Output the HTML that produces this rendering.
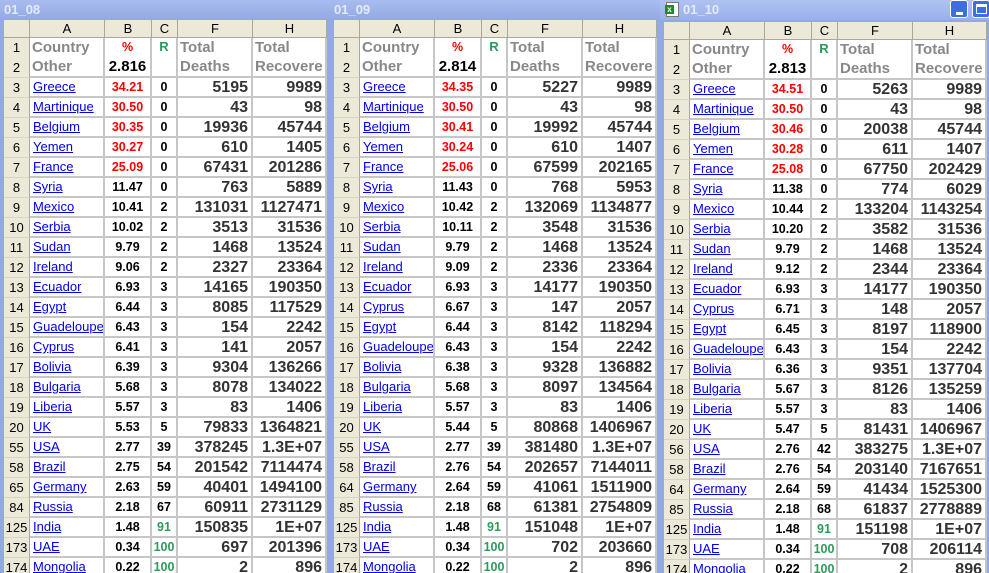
<!DOCTYPE html>
<html><head><meta charset="utf-8"><style>
*{box-sizing:border-box;margin:0;padding:0}
body{width:989px;height:573px;overflow:hidden;background:#93a9e4;font-family:"Liberation Sans",Arial,sans-serif;position:relative}
.p{position:absolute;top:0;height:573px;overflow:hidden}
.tb{position:absolute;left:0;top:0;right:0;height:20px;background:linear-gradient(#a9bcef,#93a9e4);color:#e4eafa;font-weight:bold;font-size:13px;line-height:19px;padding-left:4px}
.g{position:absolute;top:20px;left:4px;background:#fff}
.r{display:flex;height:20px}
.r>div{height:20px;border-right:2px solid #c6c6c6;border-bottom:2px solid #c6c6c6;overflow:hidden;white-space:nowrap}
.h{height:18px!important}
.h>div{height:18px!important;background:#ece9d8;border-right:1px solid #aca899!important;border-bottom:1px solid #aca899!important;text-align:center;font-size:13px;line-height:17px;color:#000}
.n{width:26px;background:#ece9d8;border-right:1px solid #aca899!important;border-bottom:1px solid #d8d4c4!important;text-align:center;font-size:13px;line-height:19px;color:#000}
.a{width:75px;padding-left:3px;font-size:13px;line-height:18px}
.a u{color:#0000ee}
.b{width:47px;text-align:center;font-size:12.5px;font-weight:bold;line-height:18px}
.c{width:26px;text-align:center;font-size:12.5px;font-weight:bold;line-height:18px}
.f{width:75px;text-align:right;padding-right:3px;font-size:16px;font-weight:bold;color:#333;line-height:19px}
.x{width:74px;text-align:right;padding-right:3px;font-size:16px;font-weight:bold;color:#333;line-height:19px}
.rd{color:#f00}.gr{color:#2e9a5c}
.hd{height:40px!important}
.hd>div{height:40px!important}
.hd .n{display:flex;flex-direction:column;line-height:20px}
.gt{color:#888;font-weight:bold;font-size:15px!important;line-height:19px!important;padding-left:2px;text-align:left!important}
</style></head><body>

<div class="p" style="left:0;width:330px">
<div class="tb">01_08</div>
<div class="g">
<div class="r h"><div style="width:26px"></div><div style="width:75px">A</div><div style="width:47px">B</div><div style="width:26px">C</div><div style="width:75px">F</div><div style="width:74px">H</div></div>
<div class="r hd"><div class="n"><span>1</span><span>2</span></div><div class="a gt">Country<br>Other</div><div class="b" style="line-height:19px"><span class="rd">%</span><br><span style="font-size:15px">2.816</span></div><div class="c gr" style="font-size:13px">R</div><div class="f gt">Total<br>Deaths</div><div class="x gt">Total<br>Recovere</div></div>
<div class="r"><div class="n">3</div><div class="a"><u>Greece</u></div><div class="b rd">34.21</div><div class="c">0</div><div class="f">5195</div><div class="x">9989</div></div>
<div class="r"><div class="n">4</div><div class="a"><u>Martinique</u></div><div class="b rd">30.50</div><div class="c">0</div><div class="f">43</div><div class="x">98</div></div>
<div class="r"><div class="n">5</div><div class="a"><u>Belgium</u></div><div class="b rd">30.35</div><div class="c">0</div><div class="f">19936</div><div class="x">45744</div></div>
<div class="r"><div class="n">6</div><div class="a"><u>Yemen</u></div><div class="b rd">30.27</div><div class="c">0</div><div class="f">610</div><div class="x">1405</div></div>
<div class="r"><div class="n">7</div><div class="a"><u>France</u></div><div class="b rd">25.09</div><div class="c">0</div><div class="f">67431</div><div class="x">201286</div></div>
<div class="r"><div class="n">8</div><div class="a"><u>Syria</u></div><div class="b">11.47</div><div class="c">0</div><div class="f">763</div><div class="x">5889</div></div>
<div class="r"><div class="n">9</div><div class="a"><u>Mexico</u></div><div class="b">10.41</div><div class="c">2</div><div class="f">131031</div><div class="x">1127471</div></div>
<div class="r"><div class="n">10</div><div class="a"><u>Serbia</u></div><div class="b">10.02</div><div class="c">2</div><div class="f">3513</div><div class="x">31536</div></div>
<div class="r"><div class="n">11</div><div class="a"><u>Sudan</u></div><div class="b">9.79</div><div class="c">2</div><div class="f">1468</div><div class="x">13524</div></div>
<div class="r"><div class="n">12</div><div class="a"><u>Ireland</u></div><div class="b">9.06</div><div class="c">2</div><div class="f">2327</div><div class="x">23364</div></div>
<div class="r"><div class="n">13</div><div class="a"><u>Ecuador</u></div><div class="b">6.93</div><div class="c">3</div><div class="f">14165</div><div class="x">190350</div></div>
<div class="r"><div class="n">14</div><div class="a"><u>Egypt</u></div><div class="b">6.44</div><div class="c">3</div><div class="f">8085</div><div class="x">117529</div></div>
<div class="r"><div class="n">15</div><div class="a"><u>Guadeloupe</u></div><div class="b">6.43</div><div class="c">3</div><div class="f">154</div><div class="x">2242</div></div>
<div class="r"><div class="n">16</div><div class="a"><u>Cyprus</u></div><div class="b">6.41</div><div class="c">3</div><div class="f">141</div><div class="x">2057</div></div>
<div class="r"><div class="n">17</div><div class="a"><u>Bolivia</u></div><div class="b">6.39</div><div class="c">3</div><div class="f">9304</div><div class="x">136266</div></div>
<div class="r"><div class="n">18</div><div class="a"><u>Bulgaria</u></div><div class="b">5.68</div><div class="c">3</div><div class="f">8078</div><div class="x">134022</div></div>
<div class="r"><div class="n">19</div><div class="a"><u>Liberia</u></div><div class="b">5.57</div><div class="c">3</div><div class="f">83</div><div class="x">1406</div></div>
<div class="r"><div class="n">20</div><div class="a"><u>UK</u></div><div class="b">5.53</div><div class="c">5</div><div class="f">79833</div><div class="x">1364821</div></div>
<div class="r"><div class="n">55</div><div class="a"><u>USA</u></div><div class="b">2.77</div><div class="c">39</div><div class="f">378245</div><div class="x">1.3E+07</div></div>
<div class="r"><div class="n">58</div><div class="a"><u>Brazil</u></div><div class="b">2.75</div><div class="c">54</div><div class="f">201542</div><div class="x">7114474</div></div>
<div class="r"><div class="n">65</div><div class="a"><u>Germany</u></div><div class="b">2.63</div><div class="c">59</div><div class="f">40401</div><div class="x">1494100</div></div>
<div class="r"><div class="n">84</div><div class="a"><u>Russia</u></div><div class="b">2.18</div><div class="c">67</div><div class="f">60911</div><div class="x">2731129</div></div>
<div class="r"><div class="n">125</div><div class="a"><u>India</u></div><div class="b">1.48</div><div class="c gr">91</div><div class="f">150835</div><div class="x">1E+07</div></div>
<div class="r"><div class="n">173</div><div class="a"><u>UAE</u></div><div class="b">0.34</div><div class="c gr">100</div><div class="f">697</div><div class="x">201396</div></div>
<div class="r"><div class="n">174</div><div class="a"><u>Mongolia</u></div><div class="b">0.22</div><div class="c gr">100</div><div class="f">2</div><div class="x">896</div></div>
</div></div>

<div class="p" style="left:330px;width:332px">
<div class="tb">01_09</div>
<div class="g">
<div class="r h"><div style="width:26px"></div><div style="width:75px">A</div><div style="width:47px">B</div><div style="width:26px">C</div><div style="width:75px">F</div><div style="width:74px">H</div></div>
<div class="r hd"><div class="n"><span>1</span><span>2</span></div><div class="a gt">Country<br>Other</div><div class="b" style="line-height:19px"><span class="rd">%</span><br><span style="font-size:15px">2.814</span></div><div class="c gr" style="font-size:13px">R</div><div class="f gt">Total<br>Deaths</div><div class="x gt">Total<br>Recovere</div></div>
<div class="r"><div class="n">3</div><div class="a"><u>Greece</u></div><div class="b rd">34.35</div><div class="c">0</div><div class="f">5227</div><div class="x">9989</div></div>
<div class="r"><div class="n">4</div><div class="a"><u>Martinique</u></div><div class="b rd">30.50</div><div class="c">0</div><div class="f">43</div><div class="x">98</div></div>
<div class="r"><div class="n">5</div><div class="a"><u>Belgium</u></div><div class="b rd">30.41</div><div class="c">0</div><div class="f">19992</div><div class="x">45744</div></div>
<div class="r"><div class="n">6</div><div class="a"><u>Yemen</u></div><div class="b rd">30.24</div><div class="c">0</div><div class="f">610</div><div class="x">1407</div></div>
<div class="r"><div class="n">7</div><div class="a"><u>France</u></div><div class="b rd">25.06</div><div class="c">0</div><div class="f">67599</div><div class="x">202165</div></div>
<div class="r"><div class="n">8</div><div class="a"><u>Syria</u></div><div class="b">11.43</div><div class="c">0</div><div class="f">768</div><div class="x">5953</div></div>
<div class="r"><div class="n">9</div><div class="a"><u>Mexico</u></div><div class="b">10.42</div><div class="c">2</div><div class="f">132069</div><div class="x">1134877</div></div>
<div class="r"><div class="n">10</div><div class="a"><u>Serbia</u></div><div class="b">10.11</div><div class="c">2</div><div class="f">3548</div><div class="x">31536</div></div>
<div class="r"><div class="n">11</div><div class="a"><u>Sudan</u></div><div class="b">9.79</div><div class="c">2</div><div class="f">1468</div><div class="x">13524</div></div>
<div class="r"><div class="n">12</div><div class="a"><u>Ireland</u></div><div class="b">9.09</div><div class="c">2</div><div class="f">2336</div><div class="x">23364</div></div>
<div class="r"><div class="n">13</div><div class="a"><u>Ecuador</u></div><div class="b">6.93</div><div class="c">3</div><div class="f">14177</div><div class="x">190350</div></div>
<div class="r"><div class="n">14</div><div class="a"><u>Cyprus</u></div><div class="b">6.67</div><div class="c">3</div><div class="f">147</div><div class="x">2057</div></div>
<div class="r"><div class="n">15</div><div class="a"><u>Egypt</u></div><div class="b">6.44</div><div class="c">3</div><div class="f">8142</div><div class="x">118294</div></div>
<div class="r"><div class="n">16</div><div class="a"><u>Guadeloupe</u></div><div class="b">6.43</div><div class="c">3</div><div class="f">154</div><div class="x">2242</div></div>
<div class="r"><div class="n">17</div><div class="a"><u>Bolivia</u></div><div class="b">6.38</div><div class="c">3</div><div class="f">9328</div><div class="x">136882</div></div>
<div class="r"><div class="n">18</div><div class="a"><u>Bulgaria</u></div><div class="b">5.68</div><div class="c">3</div><div class="f">8097</div><div class="x">134564</div></div>
<div class="r"><div class="n">19</div><div class="a"><u>Liberia</u></div><div class="b">5.57</div><div class="c">3</div><div class="f">83</div><div class="x">1406</div></div>
<div class="r"><div class="n">20</div><div class="a"><u>UK</u></div><div class="b">5.44</div><div class="c">5</div><div class="f">80868</div><div class="x">1406967</div></div>
<div class="r"><div class="n">55</div><div class="a"><u>USA</u></div><div class="b">2.77</div><div class="c">39</div><div class="f">381480</div><div class="x">1.3E+07</div></div>
<div class="r"><div class="n">58</div><div class="a"><u>Brazil</u></div><div class="b">2.76</div><div class="c">54</div><div class="f">202657</div><div class="x">7144011</div></div>
<div class="r"><div class="n">64</div><div class="a"><u>Germany</u></div><div class="b">2.64</div><div class="c">59</div><div class="f">41061</div><div class="x">1511900</div></div>
<div class="r"><div class="n">85</div><div class="a"><u>Russia</u></div><div class="b">2.18</div><div class="c">68</div><div class="f">61381</div><div class="x">2754809</div></div>
<div class="r"><div class="n">125</div><div class="a"><u>India</u></div><div class="b">1.48</div><div class="c gr">91</div><div class="f">151048</div><div class="x">1E+07</div></div>
<div class="r"><div class="n">173</div><div class="a"><u>UAE</u></div><div class="b">0.34</div><div class="c gr">100</div><div class="f">702</div><div class="x">203660</div></div>
<div class="r"><div class="n">174</div><div class="a"><u>Mongolia</u></div><div class="b">0.22</div><div class="c gr">100</div><div class="f">2</div><div class="x">896</div></div>
</div></div>

<div class="p" style="left:660px;width:329px">
<div class="tb" style="padding-left:23px;background:linear-gradient(#b0c2f2,#9ab0ea)">01_10</div>
<div style="position:absolute;left:6px;top:2px;width:13px;height:15px;background:#fff;border:1px solid #777"><div style="position:absolute;left:-2px;top:2px;width:9px;height:9px;background:#1d8a2c;color:#fff;font-size:8px;line-height:9px;text-align:center;font-weight:bold">x</div></div>
<div style="position:absolute;left:290px;top:0;width:18px;height:18px;background:#3c6ee0;border:1px solid #fff;border-radius:3px"><div style="position:absolute;left:5px;top:11px;width:7px;height:3px;background:#fff"></div></div>
<div style="position:absolute;left:312px;top:0;width:18px;height:18px;background:#3c6ee0;border:1px solid #fff;border-radius:3px"><div style="position:absolute;left:3px;top:3px;width:11px;height:10px;border:1px solid #fff;border-top-width:3px"></div></div>
<div class="g" style="top:22px">
<div class="r h"><div style="width:26px"></div><div style="width:75px">A</div><div style="width:47px">B</div><div style="width:26px">C</div><div style="width:75px">F</div><div style="width:74px">H</div></div>
<div class="r hd"><div class="n"><span>1</span><span>2</span></div><div class="a gt">Country<br>Other</div><div class="b" style="line-height:19px"><span class="rd">%</span><br><span style="font-size:15px">2.813</span></div><div class="c gr" style="font-size:13px">R</div><div class="f gt">Total<br>Deaths</div><div class="x gt">Total<br>Recovere</div></div>
<div class="r"><div class="n">3</div><div class="a"><u>Greece</u></div><div class="b rd">34.51</div><div class="c">0</div><div class="f">5263</div><div class="x">9989</div></div>
<div class="r"><div class="n">4</div><div class="a"><u>Martinique</u></div><div class="b rd">30.50</div><div class="c">0</div><div class="f">43</div><div class="x">98</div></div>
<div class="r"><div class="n">5</div><div class="a"><u>Belgium</u></div><div class="b rd">30.46</div><div class="c">0</div><div class="f">20038</div><div class="x">45744</div></div>
<div class="r"><div class="n">6</div><div class="a"><u>Yemen</u></div><div class="b rd">30.28</div><div class="c">0</div><div class="f">611</div><div class="x">1407</div></div>
<div class="r"><div class="n">7</div><div class="a"><u>France</u></div><div class="b rd">25.08</div><div class="c">0</div><div class="f">67750</div><div class="x">202429</div></div>
<div class="r"><div class="n">8</div><div class="a"><u>Syria</u></div><div class="b">11.38</div><div class="c">0</div><div class="f">774</div><div class="x">6029</div></div>
<div class="r"><div class="n">9</div><div class="a"><u>Mexico</u></div><div class="b">10.44</div><div class="c">2</div><div class="f">133204</div><div class="x">1143254</div></div>
<div class="r"><div class="n">10</div><div class="a"><u>Serbia</u></div><div class="b">10.20</div><div class="c">2</div><div class="f">3582</div><div class="x">31536</div></div>
<div class="r"><div class="n">11</div><div class="a"><u>Sudan</u></div><div class="b">9.79</div><div class="c">2</div><div class="f">1468</div><div class="x">13524</div></div>
<div class="r"><div class="n">12</div><div class="a"><u>Ireland</u></div><div class="b">9.12</div><div class="c">2</div><div class="f">2344</div><div class="x">23364</div></div>
<div class="r"><div class="n">13</div><div class="a"><u>Ecuador</u></div><div class="b">6.93</div><div class="c">3</div><div class="f">14177</div><div class="x">190350</div></div>
<div class="r"><div class="n">14</div><div class="a"><u>Cyprus</u></div><div class="b">6.71</div><div class="c">3</div><div class="f">148</div><div class="x">2057</div></div>
<div class="r"><div class="n">15</div><div class="a"><u>Egypt</u></div><div class="b">6.45</div><div class="c">3</div><div class="f">8197</div><div class="x">118900</div></div>
<div class="r"><div class="n">16</div><div class="a"><u>Guadeloupe</u></div><div class="b">6.43</div><div class="c">3</div><div class="f">154</div><div class="x">2242</div></div>
<div class="r"><div class="n">17</div><div class="a"><u>Bolivia</u></div><div class="b">6.36</div><div class="c">3</div><div class="f">9351</div><div class="x">137704</div></div>
<div class="r"><div class="n">18</div><div class="a"><u>Bulgaria</u></div><div class="b">5.67</div><div class="c">3</div><div class="f">8126</div><div class="x">135259</div></div>
<div class="r"><div class="n">19</div><div class="a"><u>Liberia</u></div><div class="b">5.57</div><div class="c">3</div><div class="f">83</div><div class="x">1406</div></div>
<div class="r"><div class="n">20</div><div class="a"><u>UK</u></div><div class="b">5.47</div><div class="c">5</div><div class="f">81431</div><div class="x">1406967</div></div>
<div class="r"><div class="n">56</div><div class="a"><u>USA</u></div><div class="b">2.76</div><div class="c">42</div><div class="f">383275</div><div class="x">1.3E+07</div></div>
<div class="r"><div class="n">58</div><div class="a"><u>Brazil</u></div><div class="b">2.76</div><div class="c">54</div><div class="f">203140</div><div class="x">7167651</div></div>
<div class="r"><div class="n">64</div><div class="a"><u>Germany</u></div><div class="b">2.64</div><div class="c">59</div><div class="f">41434</div><div class="x">1525300</div></div>
<div class="r"><div class="n">85</div><div class="a"><u>Russia</u></div><div class="b">2.18</div><div class="c">68</div><div class="f">61837</div><div class="x">2778889</div></div>
<div class="r"><div class="n">125</div><div class="a"><u>India</u></div><div class="b">1.48</div><div class="c gr">91</div><div class="f">151198</div><div class="x">1E+07</div></div>
<div class="r"><div class="n">173</div><div class="a"><u>UAE</u></div><div class="b">0.34</div><div class="c gr">100</div><div class="f">708</div><div class="x">206114</div></div>
<div class="r"><div class="n">174</div><div class="a"><u>Mongolia</u></div><div class="b">0.22</div><div class="c gr">100</div><div class="f">2</div><div class="x">896</div></div>
</div></div>
</body></html>
